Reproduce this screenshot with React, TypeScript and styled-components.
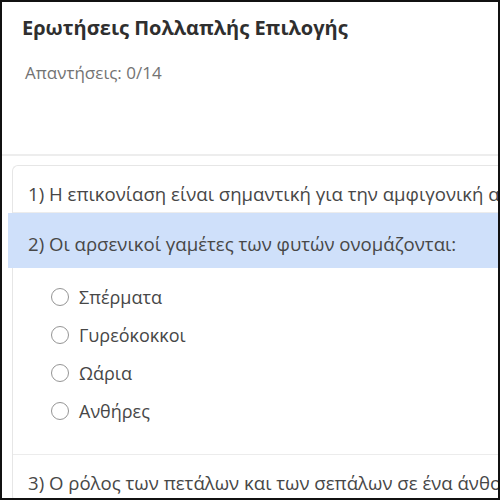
import React, { useState } from 'react';
import styled, { createGlobalStyle } from 'styled-components';

const GlobalStyle = createGlobalStyle`
  html, body {
    margin: 0;
    padding: 0;
    background: #ffffff;
  }
  * {
    box-sizing: border-box;
  }
`;

const Frame = styled.div`
  width: 500px;
  height: 500px;
  border: 2px solid #111;
  background: #fff;
  overflow: hidden;
  font-family: 'Open Sans', 'Noto Sans', sans-serif;
`;

const Header = styled.header`
  height: 154px;
  padding: 13px 20px 0 20px;
  border-bottom: 2px solid #ededed;
`;

const Title = styled.h1`
  margin: 0;
  font-size: 20px;
  font-weight: 700;
  color: #2f2f2f;
  line-height: 26px;
`;

const Progress = styled.div`
  margin-top: 21px;
  padding-left: 3px;
  font-size: 17px;
  color: #737373;
  line-height: 22px;
`;

const Card = styled.section`
  margin: 9px 0 0 10px;
  width: 600px;
  border: 1px solid #e6e6e6;
  border-right: none;
  border-radius: 6px 0 0 6px;
`;

const QuestionBlock = styled.div<{ $last?: boolean }>`
  border-bottom: ${({ $last }) => ($last ? 'none' : '1px solid #ececec')};
`;

const QuestionRow = styled.div<{ $active?: boolean }>`
  margin-left: ${({ $active }) => ($active ? '-5px' : '0')};
  padding: ${({ $active }) => ($active ? '7px 0 0 20px' : '0 0 6px 15px')};
  height: ${({ $active }) => ($active ? '55px' : '46px')};
  display: flex;
  align-items: ${({ $active }) => ($active ? 'center' : 'flex-end')};
  background: ${({ $active }) => ($active ? '#cfe0fa' : 'transparent')};
  font-size: 18.6px;
  line-height: 24px;
  color: #474747;
  white-space: nowrap;
  cursor: pointer;
`;

const Options = styled.ul`
  list-style: none;
  margin: 0;
  padding: 19px 0 33px 38px;
  display: flex;
  flex-direction: column;
  gap: 18px;
`;

const Option = styled.li`
  display: flex;
  align-items: center;
  gap: 10px;
  height: 20px;
  font-size: 18px;
  color: #474747;
  cursor: pointer;
`;

const Radio = styled.span<{ $checked?: boolean }>`
  width: 18px;
  height: 18px;
  border-radius: 50%;
  border: 1.8px solid #959595;
  display: flex;
  align-items: center;
  justify-content: center;
  flex-shrink: 0;

  &::after {
    content: '';
    width: 9px;
    height: 9px;
    border-radius: 50%;
    background: ${({ $checked }) => ($checked ? '#3b7ddd' : 'transparent')};
  }
`;

const questions = [
  { id: 1, text: 'Η επικονίαση είναι σημαντική για την αμφιγονική αναπαραγωγή των φυτών.' },
  {
    id: 2,
    text: 'Οι αρσενικοί γαμέτες των φυτών ονομάζονται:',
    options: ['Σπέρματα', 'Γυρεόκοκκοι', 'Ωάρια', 'Ανθήρες'],
  },
  { id: 3, text: 'Ο ρόλος των πετάλων και των σεπάλων σε ένα άνθος είναι:' },
];

export default function App() {
  const [answers, setAnswers] = useState<Record<number, string>>({});
  const active = 2;

  const answered = Object.keys(answers).length;

  return (
    <>
      <GlobalStyle />
      <Frame>
        <Header>
          <Title>Ερωτήσεις Πολλαπλής Επιλογής</Title>
          <Progress>Απαντήσεις: {answered}/14</Progress>
        </Header>
        <Card>
          {questions.map((q, i) => (
            <QuestionBlock key={q.id} $last={i === questions.length - 1}>
              <QuestionRow $active={q.id === active}>
                {q.id}) {q.text}
              </QuestionRow>
              {q.id === active && q.options && (
                <Options>
                  {q.options.map((opt) => (
                    <Option key={opt} onClick={() => setAnswers({ ...answers, [q.id]: opt })}>
                      <Radio $checked={answers[q.id] === opt} />
                      {opt}
                    </Option>
                  ))}
                </Options>
              )}
            </QuestionBlock>
          ))}
        </Card>
      </Frame>
    </>
  );
}
